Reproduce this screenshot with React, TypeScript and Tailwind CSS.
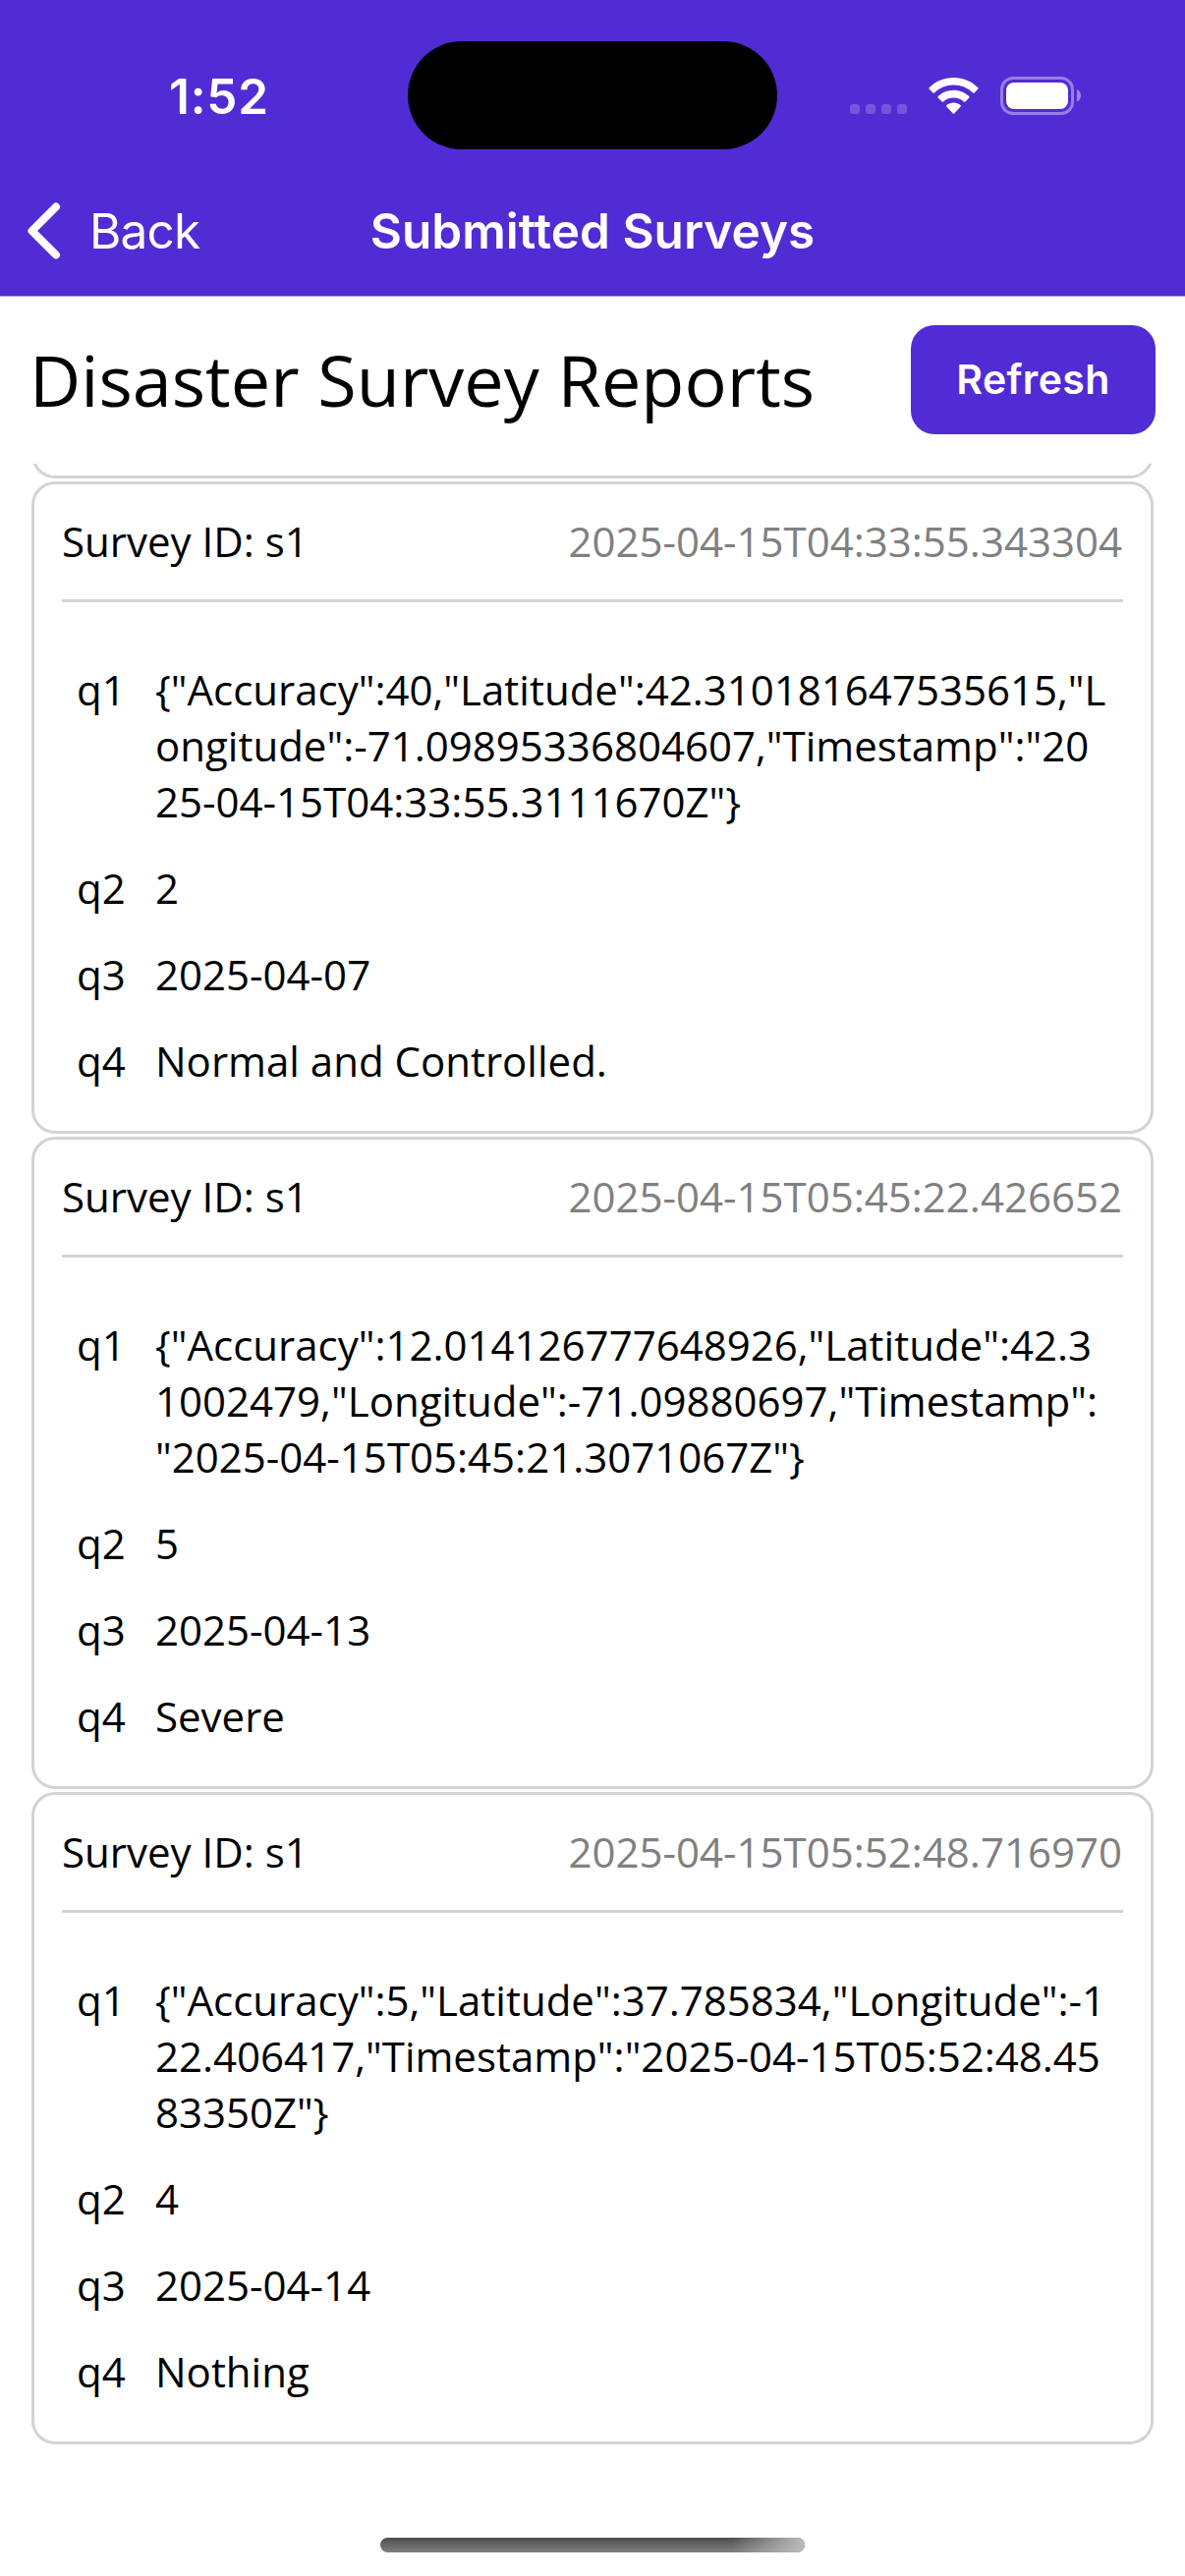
type Survey = {
  id: string;
  submittedAt: string;
  answers: { key: string; value: string }[];
};

const surveys: Survey[] = [
  {
    id: "s1",
    submittedAt: "2025-04-15T04:33:55.343304",
    answers: [
      {
        key: "q1",
        value:
          '{"Accuracy":40,"Latitude":42.310181647535615,"L\nongitude":-71.09895336804607,"Timestamp":"20\n25-04-15T04:33:55.3111670Z"}',
      },
      { key: "q2", value: "2" },
      { key: "q3", value: "2025-04-07" },
      { key: "q4", value: "Normal and Controlled." },
    ],
  },
  {
    id: "s1",
    submittedAt: "2025-04-15T05:45:22.426652",
    answers: [
      {
        key: "q1",
        value:
          '{"Accuracy":12.014126777648926,"Latitude":42.3\n1002479,"Longitude":-71.09880697,"Timestamp":\n"2025-04-15T05:45:21.3071067Z"}',
      },
      { key: "q2", value: "5" },
      { key: "q3", value: "2025-04-13" },
      { key: "q4", value: "Severe" },
    ],
  },
  {
    id: "s1",
    submittedAt: "2025-04-15T05:52:48.716970",
    answers: [
      {
        key: "q1",
        value:
          '{"Accuracy":5,"Latitude":37.785834,"Longitude":-1\n22.406417,"Timestamp":"2025-04-15T05:52:48.45\n83350Z"}',
      },
      { key: "q2", value: "4" },
      { key: "q3", value: "2025-04-14" },
      { key: "q4", value: "Nothing" },
    ],
  },
];

function StatusIcons() {
  return (
    <svg width="236" height="40" viewBox="0 0 236 40" fill="white">
      <g opacity="0.2">
        <rect x="1" y="28" width="10" height="10" rx="3" />
        <rect x="17" y="28" width="10" height="10" rx="3" />
        <rect x="33" y="28" width="10" height="10" rx="3" />
        <rect x="49" y="28" width="10" height="10" rx="3" />
      </g>
      <path d="M106.5 1c9.5 0 18.300 3.700 24.900 10.200.4.400.4 1 0 1.400l-3.800 3.900c-.4.400-1 .4-1.400 0a28 28 0 0 0-39.400 0c-.4.400-1 .4-1.400 0l-3.800-3.900c-.4-.4-.4-1 0-1.400C88.200 4.700 97 1 106.500 1Z" />
      <path d="M106.500 13.800c6 0 11.600 2.300 15.800 6.300.4.400.4 1 0 1.400l-3.900 4c-.4.300-1 .4-1.400 0a15.500 15.500 0 0 0-21 0c-.4.400-1 .3-1.400 0l-3.900-4c-.4-.4-.4-1 0-1.400a23 23 0 0 1 15.800-6.300Z" />
      <path d="M106.500 26.500c2.700 0 5.200 1 7.100 2.600.4.400.4 1 0 1.400l-6.400 7c-.4.400-1 .4-1.400 0l-6.400-7c-.4-.4-.4-1 0-1.400 1.900-1.600 4.400-2.600 7.100-2.600Z" />
      <rect x="155.500" y="1.500" width="72" height="36" rx="11.500" fill="none" stroke="white" strokeOpacity="0.400" strokeWidth="3" />
      <rect x="160" y="6" width="63" height="27" rx="8" />
      <path d="M232 13c2.500 1 4 3.500 4 6.200s-1.500 5.200-4 6.200Z" opacity="0.450" />
    </svg>
  );
}

function AppHeader() {
  return (
    <header className="h-[302px] border-b border-[#a99be0] bg-[#512bd4] font-['Inter',sans-serif] text-white">
      <div className="flex h-[193px] items-start">
        <div className="w-[415px] pl-[172px] pt-[68px]">
          <span className="block text-[49.500px] font-semibold leading-[60px] tracking-[0.800px]">1:52</span>
        </div>
        <div className="mt-[42px] h-[110px] w-[376px] rounded-full bg-black" />
        <div className="ml-[73px] pt-[78px]">
          <StatusIcons />
        </div>
      </div>
      <div className="grid h-[83px] grid-cols-[1fr_auto_1fr] items-center">
        <div className="flex items-center pl-[28px]">
          <svg width="34" height="58" viewBox="0 0 34 58" fill="none" stroke="white" strokeWidth="8" strokeLinecap="round" strokeLinejoin="round">
            <path d="M29 4.500 4.500 29 29 53.500" />
          </svg>
          <span className="ml-[29px] text-[49.500px] leading-[60px] tracking-[-0.800px]">Back</span>
        </div>
        <h1 className="text-[49.500px] font-semibold leading-[60px] tracking-[0.020px] [font-variant-ligatures:none] [font-feature-settings:'calt'_0]">
          Submitted Surveys
        </h1>
        <div />
      </div>
    </header>
  );
}

function SurveyCard({ survey }: { survey: Survey }) {
  return (
    <article className="h-[664px] shrink-0 rounded-[24px] border-[3px] border-[#d3d3d3] px-[28px] pt-[29px]">
      <div className="flex items-center justify-between border-b-[3px] border-[#d3d3d3] pb-[31px]">
        <span>Survey ID: {survey.id}</span>
        <span className="mr-px text-[#808080]">{survey.submittedAt}</span>
      </div>
      <dl className="flex flex-col gap-[31px] px-[15px] pt-[60px]">
        {survey.answers.map((answer) => (
          <div key={answer.key} className="flex gap-[31px]">
            <dt className="w-[49px]">{answer.key}</dt>
            <dd className="whitespace-pre">{answer.value}</dd>
          </div>
        ))}
      </dl>
    </article>
  );
}

export default function App() {
  return (
    <div className="flex h-[2622px] w-[1206px] flex-col overflow-hidden bg-white text-black">
      <AppHeader />
      <main className="flex min-h-0 flex-1 flex-col font-['Open_Sans',sans-serif] text-[42px] leading-[57px]">
        <div className="flex h-[170px] items-center justify-between px-[30px]">
          <h2 className="mb-[2px] text-[72px] leading-[98px]">Disaster Survey Reports</h2>
          <button className="mb-px h-[111px] w-[249px] rounded-[24px] bg-[#512bd4] pb-px font-['Inter',sans-serif] text-[41px] font-semibold leading-[50px] tracking-[0.400px] text-white">
            Refresh
          </button>
        </div>
        <div className="flex flex-1 flex-col gap-[3px] overflow-hidden px-[32px]">
          {/* Tail of the card scrolled under the toolbar */}
          <div className="-mt-[45px] h-[60px] shrink-0 rounded-b-[24px] border-x-[3px] border-b-[3px] border-[#d3d3d3]" />
          {surveys.map((survey) => (
            <SurveyCard key={survey.submittedAt} survey={survey} />
          ))}
        </div>
        <div className="flex h-[39px] items-start justify-center">
          <div className="h-[15px] w-[432px] overflow-hidden rounded-full bg-linear-to-b from-[#4d4d4d] to-[#808080]">
            <div className="ml-auto h-full w-[75px] bg-linear-to-r from-transparent to-[#bdbdbd]" />
          </div>
        </div>
      </main>
    </div>
  );
}
